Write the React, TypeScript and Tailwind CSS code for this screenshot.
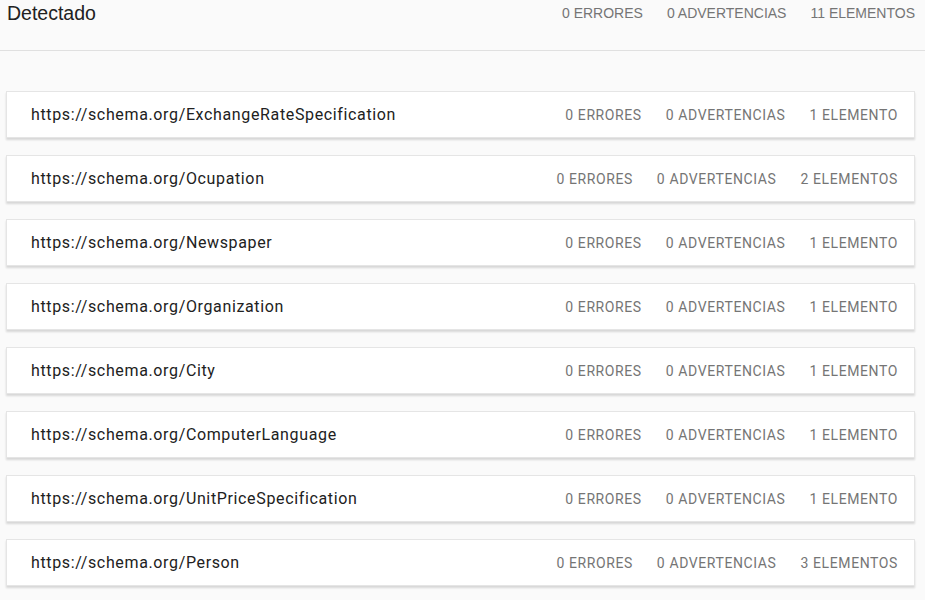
import React from 'react';

type Row = { url: string; errors: number; warnings: number; items: number };

const rows: Row[] = [
  { url: 'https://schema.org/ExchangeRateSpecification', errors: 0, warnings: 0, items: 1 },
  { url: 'https://schema.org/Ocupation', errors: 0, warnings: 0, items: 2 },
  { url: 'https://schema.org/Newspaper', errors: 0, warnings: 0, items: 1 },
  { url: 'https://schema.org/Organization', errors: 0, warnings: 0, items: 1 },
  { url: 'https://schema.org/City', errors: 0, warnings: 0, items: 1 },
  { url: 'https://schema.org/ComputerLanguage', errors: 0, warnings: 0, items: 1 },
  { url: 'https://schema.org/UnitPriceSpecification', errors: 0, warnings: 0, items: 1 },
  { url: 'https://schema.org/Person', errors: 0, warnings: 0, items: 3 },
];

function Counts({ errors, warnings, items }: { errors: number; warnings: number; items: number }) {
  return (
    <div className="flex items-center gap-[24px] pt-[2px] text-[14px] uppercase tracking-[0.6px] text-[#757575]">
      <span>{errors} errores</span>
      <span>{warnings} advertencias</span>
      <span>
        {items} {items === 1 ? 'elemento' : 'elementos'}
      </span>
    </div>
  );
}

export default function App() {
  const total = rows.reduce((n, r) => n + r.items, 0);
  return (
    <div className="min-h-[600px] bg-[#fafafa] font-['Roboto',sans-serif]">
      <div className="flex h-[51px] items-start justify-between border-b border-[#e0e0e0] pl-[7px] pr-[10px] pt-[1px] font-['Liberation_Sans',Arial,sans-serif]">
        <div className="text-[19.5px] leading-[24px] text-[#212121]">Detectado</div>
        <div className="flex items-center gap-[24px] pt-[2px] text-[14px] uppercase leading-[20px] text-[#757575]">
          <span>0 errores</span>
          <span>0 advertencias</span>
          <span>{total} elementos</span>
        </div>
      </div>
      <div className="flex flex-col gap-[17px] pl-[6px] pr-[10px] pt-[40px]">
        {rows.map((r) => (
          <div
            key={r.url}
            className="flex h-[47px] items-center justify-between border border-[#e5e5e5] bg-white pl-[24px] pr-[16px] shadow-[0_2px_2px_rgba(0,0,0,0.14)]"
          >
            <span className="text-[16px] tracking-[0.64px] text-[#212121]">{r.url}</span>
            <Counts errors={r.errors} warnings={r.warnings} items={r.items} />
          </div>
        ))}
      </div>
    </div>
  );
}
